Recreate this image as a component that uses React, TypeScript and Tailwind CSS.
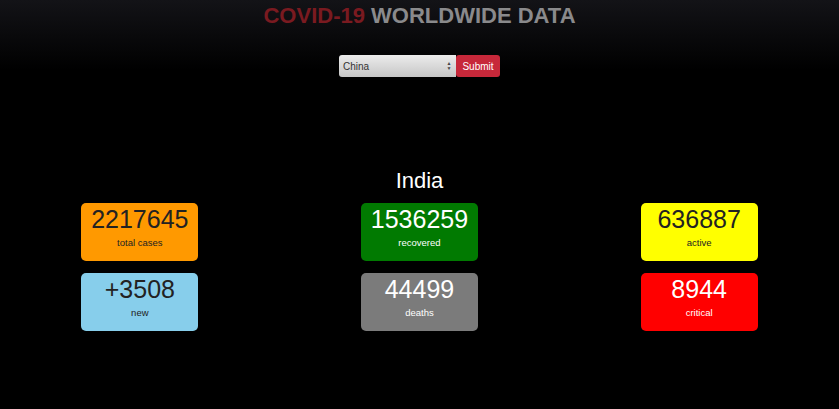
import { useState } from 'react';

type Stat = { value: string; label: string; bg: string; text: string };

const stats: Stat[] = [
  { value: '2217645', label: 'total cases', bg: 'bg-[#ff9900]', text: 'text-[#222222]' },
  { value: '1536259', label: 'recovered', bg: 'bg-[#017a01]', text: 'text-white' },
  { value: '636887', label: 'active', bg: 'bg-[#ffff00]', text: 'text-[#222222]' },
  { value: '+3508', label: 'new', bg: 'bg-[#87ceeb]', text: 'text-[#222222]' },
  { value: '44499', label: 'deaths', bg: 'bg-[#7b7b7b]', text: 'text-white' },
  { value: '8944', label: 'critical', bg: 'bg-[#ff0000]', text: 'text-white' },
];

function StatCard({ stat }: { stat: Stat }) {
  return (
    <div className="flex justify-center">
      <div className={`w-[117px] h-[58px] rounded-[5px] flex flex-col items-center ${stat.bg} ${stat.text}`}>
        <div className="text-[25px] leading-none mt-[4px]">{stat.value}</div>
        <div className="text-[9.5px] leading-none mt-[6px]">{stat.label}</div>
      </div>
    </div>
  );
}

export default function App() {
  const [country, setCountry] = useState('China');

  return (
    <div
      className="w-[839px] h-[409px] bg-[linear-gradient(to_bottom,#131317_0px,#000000_70px)] overflow-hidden"
      style={{ fontFamily: '"Liberation Sans", Arial, sans-serif' }}
    >
      {/* Title */}
      <h1 className="text-center text-[22px] font-bold leading-none pt-[5px]">
        <span className="text-[#7a1a20]">COVID-19</span>{' '}
        <span className="text-[#8a8a8c]">WORLDWIDE DATA</span>
      </h1>

      {/* Country picker */}
      <div className="flex justify-center mt-[28px]">
        <select
          value={country}
          onChange={(e) => setCountry(e.target.value)}
          className="w-[117px] h-[22px] rounded-l-[3px] bg-[linear-gradient(to_bottom,#ececec,#c6c6c6)] text-[10px] text-[#333] pl-[4px] appearance-none outline-none"
        >
          <option>China</option>
          <option>India</option>
        </select>
        <div className="relative -ml-[14px] w-[14px] flex flex-col items-center justify-center text-[5px] leading-[5px] text-[#444] pointer-events-none">
          <span>▲</span>
          <span>▼</span>
        </div>
        <button className="h-[22px] w-[44px] bg-[#c7283a] text-white text-[10px] rounded-[3px]">Submit</button>
      </div>

      {/* Country name */}
      <div className="text-center text-white text-[22px] leading-none mt-[93px]">India</div>

      {/* Stats */}
      <div className="grid grid-cols-3 gap-y-[12px] mt-[11px]">
        {stats.map((s) => (
          <StatCard key={s.label} stat={s} />
        ))}
      </div>
    </div>
  );
}
